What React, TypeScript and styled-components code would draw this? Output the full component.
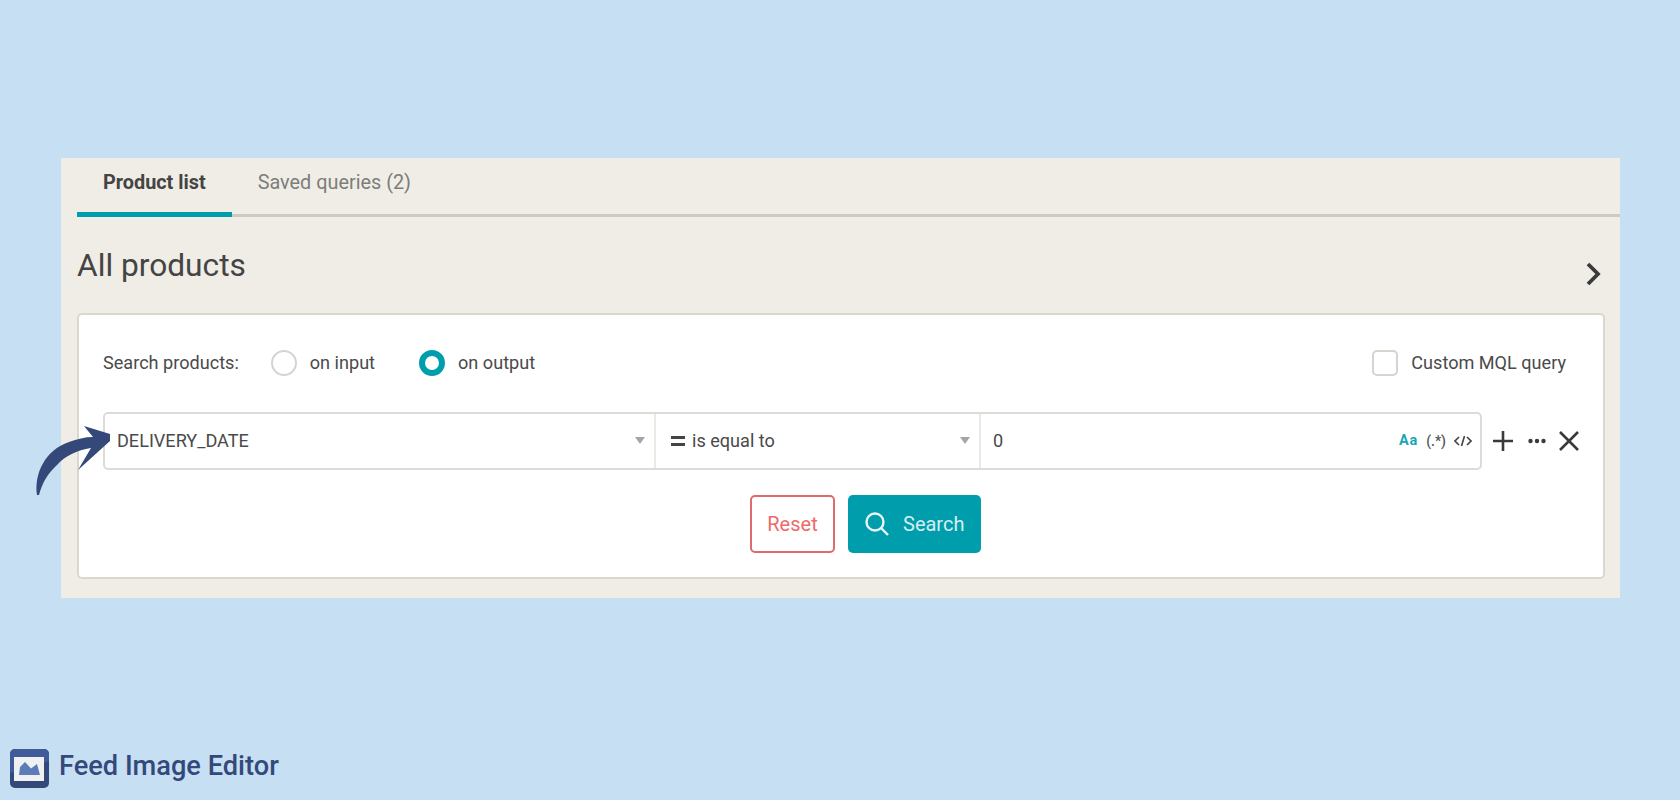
import React from "react";
import styled, { createGlobalStyle } from "styled-components";

const Global = createGlobalStyle`
  html, body { margin: 0; padding: 0; background: #c7dff2; }
  body { font-family: Roboto, "Liberation Sans", sans-serif; color: #444; }
`;

const Page = styled.div`
  position: relative;
  width: 1680px;
  height: 800px;
  overflow: hidden;
  display: flex;
  flex-direction: column;
  padding: 158px 60px 0 61px;
  box-sizing: border-box;
`;

const Panel = styled.section`
  background: #f0ede6;
  height: 440px;
  padding-left: 16px;
  display: flex;
  flex-direction: column;
`;

const Tabs = styled.nav`
  display: flex;
  height: 59px;
  border-bottom: 3px solid #cdcac4;
  box-sizing: border-box;
`;

const Tab = styled.div<{ $active?: boolean }>`
  height: 59px;
  box-sizing: border-box;
  padding: 13px 26px 0;
  font-size: 19.85px;
  line-height: 24px;
  font-weight: ${(p) => (p.$active ? 700 : 400)};
  color: ${(p) => (p.$active ? "#444" : "#7d7d7b")};
  border-bottom: ${(p) => (p.$active ? "5px solid #009dac" : "none")};
`;

const Heading = styled.div`
  display: flex;
  justify-content: space-between;
  height: 96px;
  padding-right: 17px;
`;

const Title = styled.h1`
  margin: 32px 0 0;
  font-size: 31.7px;
  line-height: 34px;
  font-weight: 400;
  color: #444;
`;

const Chevron = styled.svg`
  margin-top: 42px;
  width: 20px;
  height: 30px;
`;

const Card = styled.div`
  width: 1528px;
  height: 266px;
  box-sizing: border-box;
  background: #fff;
  border: 2px solid #dad7d1;
  border-radius: 5px;
  padding: 0 24px;
  display: flex;
  flex-direction: column;
`;

const SearchRow = styled.div`
  display: flex;
  align-items: center;
  height: 47px;
  margin-top: 24px;
  font-size: 18.1px;
  color: #4a4a4a;
`;

const RadioGroup = styled.label<{ $gap: number }>`
  display: flex;
  align-items: center;
  gap: 13px;
  margin-left: ${(p) => p.$gap}px;
`;

const Radio = styled.span<{ $on?: boolean }>`
  width: 26px;
  height: 26px;
  box-sizing: border-box;
  border-radius: 50%;
  border: ${(p) => (p.$on ? "6px solid #009dac" : "2px solid #d6d4cf")};
`;

const CheckGroup = styled.label`
  margin-left: auto;
  margin-right: 13px;
  display: flex;
  align-items: center;
  gap: 13px;
`;

const Checkbox = styled.span`
  width: 26px;
  height: 26px;
  box-sizing: border-box;
  border: 2px solid #d6d4cf;
  border-radius: 5px;
`;

const QueryRow = styled.div`
  display: flex;
  align-items: center;
  margin-top: 26px;
`;

const QueryBox = styled.div`
  width: 1382px;
  height: 58px;
  box-sizing: border-box;
  border: 2px solid #dedbd6;
  border-radius: 5px;
  display: flex;
  font-size: 18.1px;
  color: #4a4a4a;
`;

const Field = styled.div<{ $w?: number; $pad?: number }>`
  width: ${(p) => (p.$w ? `${p.$w}px` : "auto")};
  flex: ${(p) => (p.$w ? "none" : 1)};
  box-sizing: border-box;
  padding: 0 9px 1px ${(p) => p.$pad ?? 12}px;
  display: flex;
  align-items: center;
  border-right: ${(p) => (p.$w ? "2px solid #ece9e5" : "none")};
`;

const Caret = styled.span`
  margin-left: auto;
  width: 0;
  height: 0;
  border-left: 5.5px solid transparent;
  border-right: 5.5px solid transparent;
  border-top: 7px solid #a5a5a5;
`;

const Equals = styled.span`
  width: 14px;
  height: 4px;
  border-top: 3px solid #444;
  border-bottom: 3px solid #444;
  margin-right: 7px;
`;

const Flags = styled.div`
  margin-left: auto;
  margin-right: -1px;
  display: flex;
  align-items: center;
  gap: 8px;
  font-size: 14px;
  font-weight: 500;
  color: #555;
`;

const CaseFlag = styled.span`
  color: #1aa5b2;
  font-weight: 700;
  font-size: 14.5px;
  letter-spacing: 0.8px;
`;

const ActionIcons = styled.div`
  display: flex;
  align-items: center;
  margin-left: 11px;
`;

const DotsIcon = styled.svg`
  margin: 0 13px 0 15px;
`;

const Buttons = styled.div`
  display: flex;
  justify-content: center;
  gap: 13px;
  margin-top: 25px;
  padding-left: 49px;
`;

const ResetButton = styled.button`
  width: 85px;
  height: 58px;
  box-sizing: border-box;
  border: 2px solid #dd6b6b;
  border-radius: 5px;
  background: #fff;
  color: #f0696a;
  font: 400 20px Roboto, sans-serif;
`;

const SearchButton = styled.button`
  width: 133px;
  height: 58px;
  box-sizing: border-box;
  border: none;
  border-radius: 5px;
  background: #009dac;
  color: #d5eef0;
  font: 400 20px Roboto, sans-serif;
  display: flex;
  align-items: center;
  gap: 13px;
  padding: 0 0 0 16px;
`;

const Brand = styled.footer`
  position: absolute;
  left: 10px;
  bottom: 12px;
  display: flex;
  align-items: center;
  gap: 10px;
  font-size: 27.2px;
  font-weight: 500;
  color: #34497a;
`;

const BrandName = styled.span`
  margin-top: -5px;
`;

const Arrow = styled.svg`
  position: absolute;
  left: 33px;
  top: 424px;
  width: 82px;
  height: 76px;
`;

export default function App() {
  return (
    <>
      <Global />
      <Page>
        <Panel>
          <Tabs>
            <Tab $active>Product list</Tab>
            <Tab>Saved queries (2)</Tab>
          </Tabs>
          <Heading>
            <Title>All products</Title>
            <Chevron viewBox="0 0 20 30">
              <path d="M5 5 L15 15 L5 25" fill="none" stroke="#3a3a3a" strokeWidth="3.8" />
            </Chevron>
          </Heading>
          <Card>
            <SearchRow>
              <span>Search products:</span>
              <RadioGroup $gap={32}><Radio />on input</RadioGroup>
              <RadioGroup $gap={44}><Radio $on />on output</RadioGroup>
              <CheckGroup><Checkbox />Custom MQL query</CheckGroup>
            </SearchRow>
            <QueryRow>
              <QueryBox>
                <Field $w={551}>DELIVERY_DATE<Caret /></Field>
                <Field $w={325} $pad={15}><Equals />is equal to<Caret /></Field>
                <Field>0
                  <Flags>
                    <CaseFlag>Aa</CaseFlag>
                    <span>(.*)</span>
                    <svg width="18" height="12" viewBox="0 0 18 12" fill="none" stroke="#444" strokeWidth="1.6">
                      <path d="M5 2 L1 6 L5 10 M13 2 L17 6 L13 10 M10.5 1 L7.5 11" />
                    </svg>
                  </Flags>
                </Field>
              </QueryBox>
              <ActionIcons>
                <svg width="20" height="20" viewBox="0 0 20 20" stroke="#3a3a3a" strokeWidth="2.6">
                  <path d="M10 0 V20 M0 10 H20" />
                </svg>
                <DotsIcon width="18" height="6" viewBox="0 0 18 6" fill="#3a3a3a">
                  <circle cx="2.5" cy="3" r="2.2" /><circle cx="9" cy="3" r="2.2" /><circle cx="15.5" cy="3" r="2.2" />
                </DotsIcon>
                <svg width="20" height="20" viewBox="0 0 20 20" stroke="#3a3a3a" strokeWidth="2.6">
                  <path d="M1 1 L19 19 M19 1 L1 19" />
                </svg>
              </ActionIcons>
            </QueryRow>
            <Buttons>
              <ResetButton>Reset</ResetButton>
              <SearchButton>
                <svg width="26" height="26" viewBox="0 0 26 26" fill="none" stroke="#eaf7f8" strokeWidth="2.4">
                  <circle cx="11" cy="11" r="8.5" /><path d="M17 17 L24 24" />
                </svg>
                Search
              </SearchButton>
            </Buttons>
          </Card>
        </Panel>
        <Arrow viewBox="0 0 82 76">
          <path fill="#34497a" d="M4 71 C1 50 12 26 36 18 C44 15 52 13 60 13 L51 2 L77 10 L77 17 L45 46 L58 24 C44 26 32 32 24 41 C14 50 9 60 6 71 Z" />
        </Arrow>
        <Brand>
          <svg width="39" height="39" viewBox="0 0 39 39">
            <rect width="39" height="39" rx="5" fill="#34497a" />
            <path d="M0 5 a5 5 0 0 1 5 -5 H34 a5 5 0 0 1 5 5 V12 L0 24 Z" fill="#3f5c99" />
            <rect x="4" y="8" width="30" height="24" fill="#eef0f2" />
            <path d="M9 26 L10 18 L15 13 L21 19.5 L27 15 L30 26 Z" fill="#5b7cb8" />
          </svg>
          <BrandName>Feed Image Editor</BrandName>
        </Brand>
      </Page>
    </>
  );
}
